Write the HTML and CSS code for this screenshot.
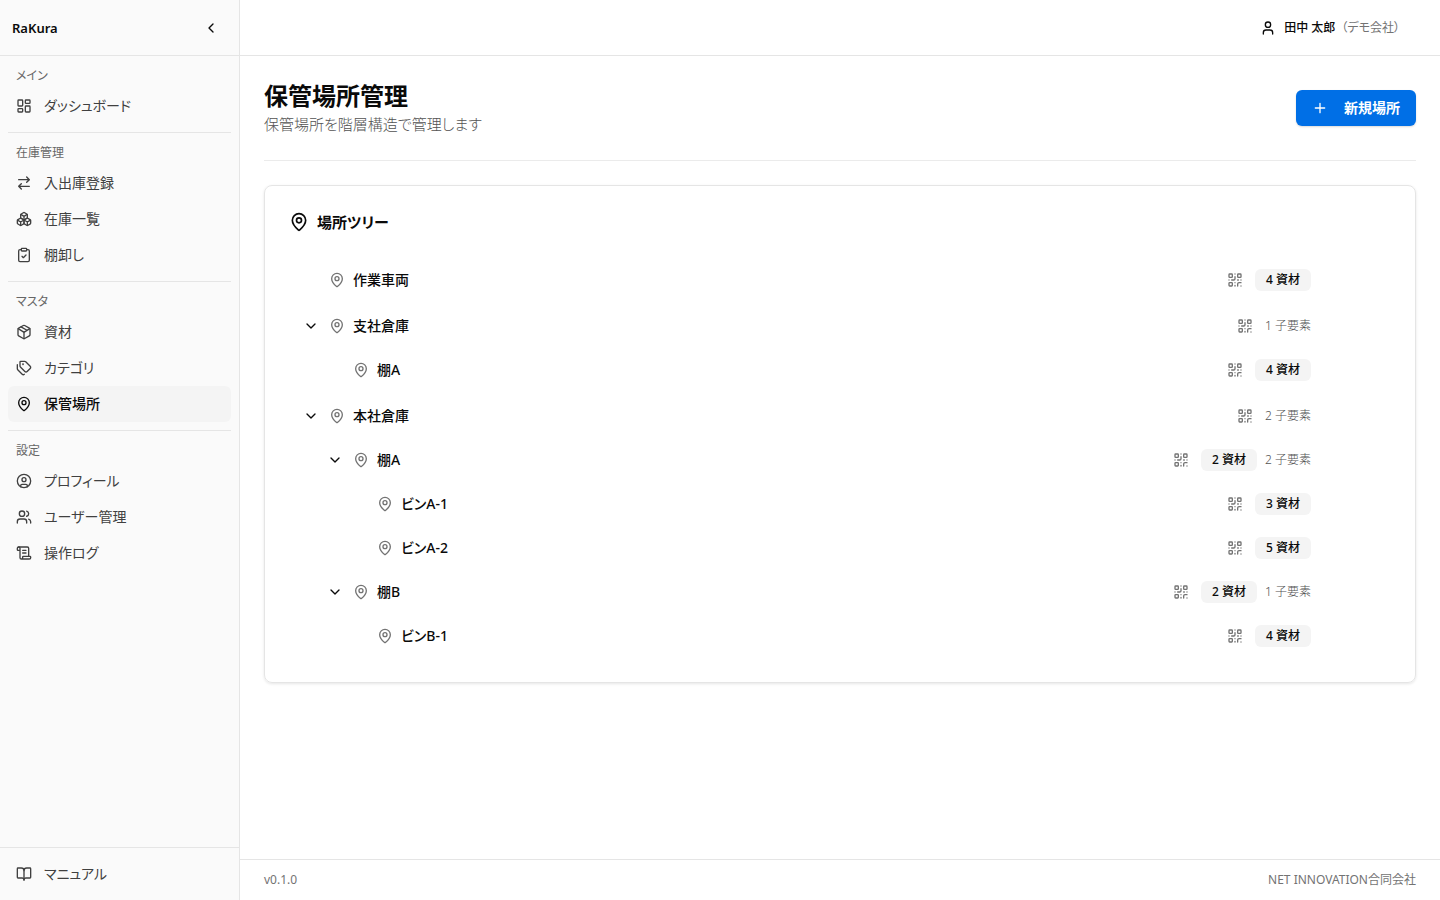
FILE: index.html
```html
<!DOCTYPE html>
<html lang="ja">
<head>
    <meta charset="UTF-8">
    <meta name="viewport" content="width=device-width, initial-scale=1.0">
    <title>保管場所管理 | RaKura</title>
    <link rel="stylesheet" href="styles.css">
</head>
<body>
    <!-- icons -->
    <svg class="sprite" aria-hidden="true">
        <symbol id="i-left" viewBox="0 0 24 24"><path d="m15 18-6-6 6-6"/></symbol>
        <symbol id="i-down" viewBox="0 0 24 24"><path d="m6 9 6 6 6-6"/></symbol>
        <symbol id="i-plus" viewBox="0 0 24 24"><path d="M5 12h14M12 5v14"/></symbol>
        <symbol id="i-dashboard" viewBox="0 0 24 24"><rect x="3" y="3" width="7" height="9" rx="1"/><rect x="14" y="3" width="7" height="5" rx="1"/><rect x="14" y="12" width="7" height="9" rx="1"/><rect x="3" y="16" width="7" height="5" rx="1"/></symbol>
        <symbol id="i-arrows" viewBox="0 0 24 24"><path d="m16 3 4 4-4 4M20 7H4M8 21l-4-4 4-4M4 17h16"/></symbol>
        <symbol id="i-boxes" viewBox="0 0 24 24"><path d="M2.97 12.92A2 2 0 0 0 2 14.63v3.24a2 2 0 0 0 .97 1.71l3 1.8a2 2 0 0 0 2.06 0L12 19v-5.5l-5-3-4.03 2.42Z"/><path d="m7 16.5-4.74-2.85M7 16.5l5-3M7 16.5v5.17"/><path d="M12 13.5V19l3.97 2.38a2 2 0 0 0 2.06 0l3-1.8a2 2 0 0 0 .97-1.71v-3.24a2 2 0 0 0-.97-1.71L17 10.5l-5 3Z"/><path d="m17 16.5-5-3M17 16.5l4.74-2.85M17 16.5v5.17"/><path d="M7.97 4.42A2 2 0 0 0 7 6.13v4.37l5 3 5-3V6.13a2 2 0 0 0-.97-1.71l-3-1.8a2 2 0 0 0-2.06 0l-3 1.8Z"/><path d="M12 8 7.26 5.15M12 8l4.74-2.85M12 13.5V8"/></symbol>
        <symbol id="i-clipboard" viewBox="0 0 24 24"><rect x="8" y="2" width="8" height="4" rx="1"/><path d="M16 4h2a2 2 0 0 1 2 2v14a2 2 0 0 1-2 2H6a2 2 0 0 1-2-2V6a2 2 0 0 1 2-2h2"/><path d="m9 14 2 2 4-4"/></symbol>
        <symbol id="i-package" viewBox="0 0 24 24"><path d="M11 21.73a2 2 0 0 0 2 0l7-4A2 2 0 0 0 21 16V8a2 2 0 0 0-1-1.73l-7-4a2 2 0 0 0-2 0l-7 4A2 2 0 0 0 3 8v8a2 2 0 0 0 1 1.73z"/><path d="M12 22V12"/><path d="m3.3 7 7.7 4.73a2 2 0 0 0 2 0L20.7 7M7.5 4.27l9 5.15"/></symbol>
        <symbol id="i-tags" viewBox="0 0 24 24"><path d="M13.17 2a2 2 0 0 1 1.42.59l6.7 6.7a2.4 2.4 0 0 1 0 3.41l-4.59 4.6a2.4 2.4 0 0 1-3.4 0l-6.71-6.71A2 2 0 0 1 6 9.17V3a1 1 0 0 1 1-1z"/><path d="M2 7v6.17a2 2 0 0 0 .59 1.42l6.7 6.7a2.4 2.4 0 0 0 3.2.2"/><circle cx="10.5" cy="6.5" r=".5"/></symbol>
        <symbol id="i-pin" viewBox="0 0 24 24"><path d="M20 10c0 4.993-5.539 10.193-7.399 11.799a1 1 0 0 1-1.202 0C9.539 20.193 4 14.993 4 10a8 8 0 0 1 16 0"/><circle cx="12" cy="10" r="3"/></symbol>
        <symbol id="i-profile" viewBox="0 0 24 24"><circle cx="12" cy="12" r="10"/><circle cx="12" cy="10" r="3"/><path d="M7 20.66V19a2 2 0 0 1 2-2h6a2 2 0 0 1 2 2v1.66"/></symbol>
        <symbol id="i-users" viewBox="0 0 24 24"><path d="M16 21v-2a4 4 0 0 0-4-4H6a4 4 0 0 0-4 4v2"/><circle cx="9" cy="7" r="4"/><path d="M22 21v-2a4 4 0 0 0-3-3.87M16 3.13a4 4 0 0 1 0 7.75"/></symbol>
        <symbol id="i-log" viewBox="0 0 24 24"><path d="M15 12h-5M15 8h-5M19 17V5a2 2 0 0 0-2-2H4"/><path d="M8 21h12a2 2 0 0 0 2-2v-1a1 1 0 0 0-1-1H11a1 1 0 0 0-1 1v1a2 2 0 1 1-4 0V5a2 2 0 1 0-4 0v2a1 1 0 0 0 1 1h3"/></symbol>
        <symbol id="i-book" viewBox="0 0 24 24"><path d="M12 7v14"/><path d="M3 18a1 1 0 0 1-1-1V4a1 1 0 0 1 1-1h5a4 4 0 0 1 4 4 4 4 0 0 1 4-4h5a1 1 0 0 1 1 1v13a1 1 0 0 1-1 1h-6a3 3 0 0 0-3 3 3 3 0 0 0-3-3z"/></symbol>
        <symbol id="i-user" viewBox="0 0 24 24"><path d="M19 21v-2a4 4 0 0 0-4-4H9a4 4 0 0 0-4 4v2"/><circle cx="12" cy="7" r="4"/></symbol>
        <symbol id="i-qr" viewBox="0 0 24 24"><rect x="3" y="3" width="5" height="5" rx="1"/><rect x="16" y="3" width="5" height="5" rx="1"/><rect x="3" y="16" width="5" height="5" rx="1"/><path d="M21 16h-3a2 2 0 0 0-2 2v3M21 21v.01M12 7v3a2 2 0 0 1-2 2H7M3 12h.01M12 3h.01M12 16v.01M16 12h1M21 12v.01M12 21v-1"/></symbol>
    </svg>

    <div class="app">
        <aside class="sidebar">
            <div class="sidebar-header">
                <span class="brand">RaKura</span>
                <button type="button" class="icon-btn collapse" aria-label="サイドバーを閉じる"><svg class="icon"><use href="#i-left"/></svg></button>
            </div>
            <nav class="nav">
                <div class="nav-group">
                    <h2>メイン</h2>
                    <a href="#" class="nav-item"><svg class="icon"><use href="#i-dashboard"/></svg>ダッシュボード</a>
                </div>
                <div class="nav-group">
                    <h2>在庫管理</h2>
                    <a href="#" class="nav-item"><svg class="icon"><use href="#i-arrows"/></svg>入出庫登録</a>
                    <a href="#" class="nav-item"><svg class="icon"><use href="#i-boxes"/></svg>在庫一覧</a>
                    <a href="#" class="nav-item"><svg class="icon"><use href="#i-clipboard"/></svg>棚卸し</a>
                </div>
                <div class="nav-group">
                    <h2>マスタ</h2>
                    <a href="#" class="nav-item"><svg class="icon"><use href="#i-package"/></svg>資材</a>
                    <a href="#" class="nav-item"><svg class="icon"><use href="#i-tags"/></svg>カテゴリ</a>
                    <a href="#" class="nav-item active" aria-current="page"><svg class="icon"><use href="#i-pin"/></svg>保管場所</a>
                </div>
                <div class="nav-group">
                    <h2>設定</h2>
                    <a href="#" class="nav-item"><svg class="icon"><use href="#i-profile"/></svg>プロフィール</a>
                    <a href="#" class="nav-item"><svg class="icon"><use href="#i-users"/></svg>ユーザー管理</a>
                    <a href="#" class="nav-item"><svg class="icon"><use href="#i-log"/></svg>操作ログ</a>
                </div>
            </nav>
            <div class="sidebar-footer">
                <a href="#" class="nav-item"><svg class="icon"><use href="#i-book"/></svg>マニュアル</a>
            </div>
        </aside>

        <div class="main">
            <header class="topbar">
                <button type="button" class="user-btn">
                    <svg class="icon"><use href="#i-user"/></svg>
                    <span>田中 太郎<span class="company">（デモ会社）</span></span>
                </button>
            </header>

            <main class="content">
                <div class="page-header">
                    <div>
                        <h1>保管場所管理</h1>
                        <p>保管場所を階層構造で管理します</p>
                    </div>
                    <button type="button" class="primary-btn"><svg class="icon"><use href="#i-plus"/></svg>新規場所</button>
                </div>

                <section class="card">
                    <h2 class="card-title"><svg class="icon"><use href="#i-pin"/></svg>場所ツリー</h2>
                    <ul class="tree">
                        <li>
                            <div class="row">
                                <span class="toggle"></span>
                                <svg class="icon pin"><use href="#i-pin"/></svg>
                                <span class="name">作業車両</span>
                                <button type="button" class="icon-btn qr" aria-label="QRコード"><svg class="icon"><use href="#i-qr"/></svg></button>
                                <span class="badge">4 資材</span>
                            </div>
                        </li>
                        <li>
                            <div class="row">
                                <button type="button" class="icon-btn toggle" aria-label="折りたたむ" aria-expanded="true"><svg class="icon"><use href="#i-down"/></svg></button>
                                <svg class="icon pin"><use href="#i-pin"/></svg>
                                <span class="name">支社倉庫</span>
                                <button type="button" class="icon-btn qr" aria-label="QRコード"><svg class="icon"><use href="#i-qr"/></svg></button>
                                <span class="children">1 子要素</span>
                            </div>
                            <ul>
                                <li>
                                    <div class="row">
                                        <span class="toggle"></span>
                                        <svg class="icon pin"><use href="#i-pin"/></svg>
                                        <span class="name">棚A</span>
                                        <button type="button" class="icon-btn qr" aria-label="QRコード"><svg class="icon"><use href="#i-qr"/></svg></button>
                                        <span class="badge">4 資材</span>
                                    </div>
                                </li>
                            </ul>
                        </li>
                        <li>
                            <div class="row">
                                <button type="button" class="icon-btn toggle" aria-label="折りたたむ" aria-expanded="true"><svg class="icon"><use href="#i-down"/></svg></button>
                                <svg class="icon pin"><use href="#i-pin"/></svg>
                                <span class="name">本社倉庫</span>
                                <button type="button" class="icon-btn qr" aria-label="QRコード"><svg class="icon"><use href="#i-qr"/></svg></button>
                                <span class="children">2 子要素</span>
                            </div>
                            <ul>
                                <li>
                                    <div class="row">
                                        <button type="button" class="icon-btn toggle" aria-label="折りたたむ" aria-expanded="true"><svg class="icon"><use href="#i-down"/></svg></button>
                                        <svg class="icon pin"><use href="#i-pin"/></svg>
                                        <span class="name">棚A</span>
                                        <button type="button" class="icon-btn qr" aria-label="QRコード"><svg class="icon"><use href="#i-qr"/></svg></button>
                                        <span class="badge">2 資材</span>
                                        <span class="children">2 子要素</span>
                                    </div>
                                    <ul>
                                        <li>
                                            <div class="row">
                                                <span class="toggle"></span>
                                                <svg class="icon pin"><use href="#i-pin"/></svg>
                                                <span class="name">ビンA-1</span>
                                                <button type="button" class="icon-btn qr" aria-label="QRコード"><svg class="icon"><use href="#i-qr"/></svg></button>
                                                <span class="badge">3 資材</span>
                                            </div>
                                        </li>
                                        <li>
                                            <div class="row">
                                                <span class="toggle"></span>
                                                <svg class="icon pin"><use href="#i-pin"/></svg>
                                                <span class="name">ビンA-2</span>
                                                <button type="button" class="icon-btn qr" aria-label="QRコード"><svg class="icon"><use href="#i-qr"/></svg></button>
                                                <span class="badge">5 資材</span>
                                            </div>
                                        </li>
                                    </ul>
                                </li>
                                <li>
                                    <div class="row">
                                        <button type="button" class="icon-btn toggle" aria-label="折りたたむ" aria-expanded="true"><svg class="icon"><use href="#i-down"/></svg></button>
                                        <svg class="icon pin"><use href="#i-pin"/></svg>
                                        <span class="name">棚B</span>
                                        <button type="button" class="icon-btn qr" aria-label="QRコード"><svg class="icon"><use href="#i-qr"/></svg></button>
                                        <span class="badge">2 資材</span>
                                        <span class="children">1 子要素</span>
                                    </div>
                                    <ul>
                                        <li>
                                            <div class="row">
                                                <span class="toggle"></span>
                                                <svg class="icon pin"><use href="#i-pin"/></svg>
                                                <span class="name">ビンB-1</span>
                                                <button type="button" class="icon-btn qr" aria-label="QRコード"><svg class="icon"><use href="#i-qr"/></svg></button>
                                                <span class="badge">4 資材</span>
                                            </div>
                                        </li>
                                    </ul>
                                </li>
                            </ul>
                        </li>
                    </ul>
                </section>
            </main>

            <footer class="footer">
                <span>v0.1.0</span>
                <span>NET INNOVATION合同会社</span>
            </footer>
        </div>
    </div>
</body>
</html>
```
FILE: styles.css
```css
* {
    box-sizing: border-box;
}

body {
    margin: 0;
    font-family: "Noto Sans", "Noto Sans CJK JP", sans-serif;
    font-feature-settings: "palt";
    font-size: 14px;
    line-height: 20px;
    color: #0a0a0a;
    background: #fff;
}

h1, h2, p, ul {
    margin: 0;
    padding: 0;
}

ul {
    list-style: none;
}

a {
    color: inherit;
    text-decoration: none;
}

button {
    font: inherit;
    font-feature-settings: inherit;
    color: inherit;
    background: none;
    border: none;
    padding: 0;
    cursor: pointer;
}

.sprite {
    display: none;
}

.icon {
    width: 16px;
    height: 16px;
    flex-shrink: 0;
    fill: none;
    stroke: currentColor;
    stroke-width: 2;
    stroke-linecap: round;
    stroke-linejoin: round;
}

.icon-btn {
    display: flex;
    align-items: center;
    justify-content: center;
}

.app {
    display: flex;
    min-height: 100vh;
}

/* sidebar */
.sidebar {
    display: flex;
    flex-direction: column;
    flex-shrink: 0;
    width: 240px;
    background: #fafafa;
    border-right: 1px solid #e5e5e5;
}

.sidebar-header {
    display: flex;
    align-items: center;
    justify-content: space-between;
    height: 56px;
    padding: 0 12px;
    border-bottom: 1px solid #e5e5e5;
}

.brand {
    font-size: 13px;
    font-weight: 600;
}

.collapse {
    width: 32px;
    height: 32px;
}

.nav {
    flex: 1;
    padding: 0 8px;
}

.nav-group {
    padding: 8px 0;
}

.nav-group + .nav-group {
    border-top: 1px solid #e5e5e5;
}

.nav-group h2 {
    padding: 0 8px;
    font-size: 12px;
    font-weight: 400;
    line-height: 24px;
    color: #666;
}

.nav-item {
    display: flex;
    align-items: center;
    gap: 12px;
    height: 36px;
    padding: 0 8px;
    border-radius: 6px;
    color: #404040;
}

.nav-item.active {
    background: #f4f4f4;
    color: #0a0a0a;
    font-weight: 500;
}

.sidebar-footer {
    padding: 8px;
    border-top: 1px solid #e5e5e5;
}

/* main */
.main {
    display: flex;
    flex: 1;
    flex-direction: column;
    min-width: 0;
}

.topbar {
    display: flex;
    align-items: center;
    justify-content: flex-end;
    height: 56px;
    padding: 0 24px;
    border-bottom: 1px solid #e5e5e5;
}

.user-btn {
    display: flex;
    align-items: center;
    gap: 8px;
    height: 32px;
    padding: 0 16px;
    font-size: 12px;
    font-weight: 500;
}

.company {
    margin-left: 6px;
    font-weight: 400;
    color: #737373;
}

.content {
    flex: 1;
    padding: 24px;
}

.page-header {
    display: flex;
    align-items: center;
    justify-content: space-between;
    padding-bottom: 24px;
    margin-bottom: 24px;
    border-bottom: 1px solid #ebebeb;
}

.page-header h1 {
    font-size: 24px;
    font-weight: 600;
    line-height: 32px;
}

.page-header p {
    font-size: 15px;
    font-weight: 300;
    line-height: 24px;
    color: #525252;
}

.primary-btn {
    display: flex;
    align-items: center;
    gap: 16px;
    height: 36px;
    padding: 0 16px;
    border-radius: 6px;
    background: #006fe6;
    box-shadow: 0 1px 2px rgba(0, 0, 0, 0.15);
    color: #fff;
    font-weight: 700;
}

.card {
    padding: 24px;
    border: 1px solid #e5e5e5;
    border-radius: 8px;
    box-shadow: 0 1px 3px rgba(0, 0, 0, 0.1);
}

.card-title {
    display: flex;
    align-items: center;
    gap: 8px;
    margin-bottom: 24px;
    font-size: 15px;
    font-weight: 600;
    line-height: 24px;
}

.card-title .icon {
    width: 20px;
    height: 20px;
}

/* tree */
.tree {
    display: flex;
    flex-direction: column;
    gap: 2px;
}

.tree ul {
    padding-left: 24px;
}

.row {
    display: flex;
    align-items: center;
    gap: 8px;
    height: 44px;
    padding: 0 80px 0 12px;
}

.toggle {
    width: 20px;
    height: 20px;
}

.pin, .qr {
    color: #737373;
}

.name {
    flex: 1;
    font-weight: 500;
}

.qr {
    width: 24px;
    height: 24px;
}

.badge {
    padding: 1px 11px;
    border-radius: 6px;
    background: #f4f4f4;
    font-size: 12px;
    font-weight: 500;
}

.children {
    font-size: 12px;
    font-weight: 300;
    color: #525252;
}

.footer {
    display: flex;
    align-items: center;
    justify-content: space-between;
    padding: 10px 24px;
    border-top: 1px solid #e5e5e5;
    font-size: 12px;
    color: #737373;
}
```
